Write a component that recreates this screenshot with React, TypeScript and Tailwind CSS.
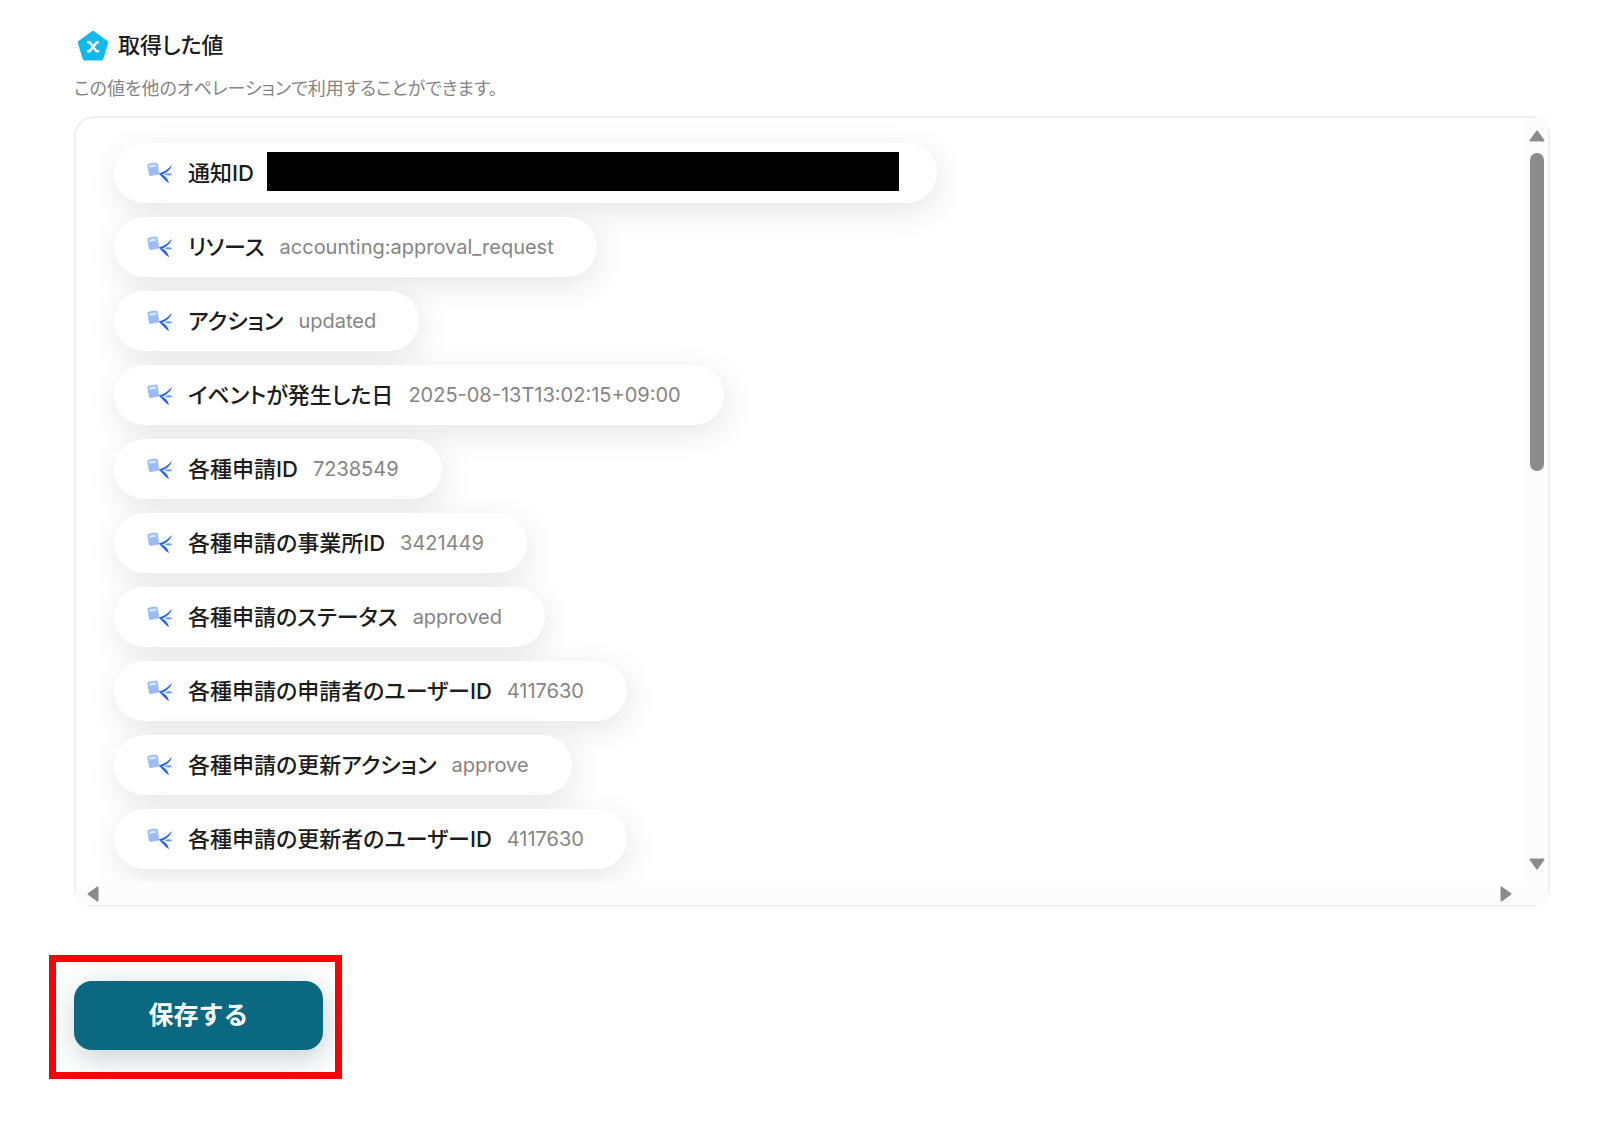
type Item = { label: string; value?: string };

const items: Item[] = [
  { label: '通知ID' },
  { label: 'リソース', value: 'accounting:approval_request' },
  { label: 'アクション', value: 'updated' },
  { label: 'イベントが発生した日', value: '2025-08-13T13:02:15+09:00' },
  { label: '各種申請ID', value: '7238549' },
  { label: '各種申請の事業所ID', value: '3421449' },
  { label: '各種申請のステータス', value: 'approved' },
  { label: '各種申請の申請者のユーザーID', value: '4117630' },
  { label: '各種申請の更新アクション', value: 'approve' },
  { label: '各種申請の更新者のユーザーID', value: '4117630' },
];

function PentagonIcon() {
  return (
    <svg viewBox="0 0 32 32" className="size-8" aria-hidden="true">
      <path
        d="M16 2.6 29.4 12.4 24.6 28.6H7.4L2.6 12.4Z"
        fill="#12b9ec"
        stroke="#12b9ec"
        strokeWidth="3.6"
        strokeLinejoin="round"
      />
      <path
        d="M11.2 12.2h1.6l6.6 9h1.8M20.8 12.2h-1L12.600 21.200h-1.600"
        fill="none"
        stroke="#fff"
        strokeWidth="2.4"
        strokeLinecap="round"
        strokeLinejoin="round"
      />
    </svg>
  );
}

function ServiceIcon() {
  return (
    <svg viewBox="0 0 26 22" className="h-[22px] w-[26px] shrink-0" aria-hidden="true">
      <g transform="rotate(-9 6 7)">
        <rect x="1" y="1" width="10.5" height="12.5" rx="2" fill="#9dbdfb" />
        <rect x="2.8" y="2.8" width="6.800" height="2.4" rx="0.8" fill="#dce8ff" />
        <path d="M3 7.8h6.500M3 10.800h6.500" stroke="#8fb2f9" strokeWidth="1" strokeDasharray="1.5 0.8" />
      </g>
      <path d="M11.5 11.5C17 10 21 7.500 24.800 3 24 7 20 10.800 15.500 12.400Z" fill="#2864f0" />
      <path d="M11.5 11.5C16.500 12 20.800 15.500 22 21.200 18 19 15.500 15 11.500 11.500Z" fill="#2864f0" />
      <path d="M17.5 12.400c2.500-1.500 5.500-1.500 8 0-2.500 1.500-5.500 1.500-8 0Z" fill="#6c99f7" />
    </svg>
  );
}

function Arrow({ turn, label }: { turn: string; label: string }) {
  return (
    <button type="button" aria-label={label} className="flex size-4 items-center justify-center">
      <svg viewBox="0 0 16 12" className={`h-3 w-4 shrink-0 ${turn}`} aria-hidden="true">
        <path d="M8 1.5 14.5 10.5H1.5Z" fill="#8b8b8b" stroke="#8b8b8b" strokeWidth="2" strokeLinejoin="round" />
      </svg>
    </button>
  );
}

function Pill({ label, value }: Item) {
  return (
    <li className="flex h-[60px] items-center rounded-full bg-white pr-[43px] pb-px pl-[33px] shadow-[2px_8px_32px_rgba(0,0,0,0.1)]">
      <ServiceIcon />
      <span className="ml-[15px] text-[22px] font-medium text-[#1c1c1c]">{label}</span>
      {value ? (
        <span className="ml-[15px] text-[20px] text-[#858585]">{value}</span>
      ) : (
        <span className="-mr-[5px] mb-0.5 ml-[13px] h-[39px] w-[632px] bg-black" />
      )}
    </li>
  );
}

export default function App() {
  return (
    <main className="bg-white pt-7 pr-[50px] pb-12 pl-[49px] font-[Inter,'Noto_Sans_CJK_JP',sans-serif] leading-8 [font-feature-settings:'palt']">
      <section className="pl-[25px]">
        <div className="flex items-center gap-[9px] pt-px pl-[3px]">
          <PentagonIcon />
          <h1 className="pb-0.5 text-[22px] font-medium text-[#1c1c1c]">取得した値</h1>
        </div>
        <p className="mt-2.5 text-[18px] text-[#858585]">この値を他のオペレーションで利用することができます。</p>

        <div className="mt-[11px] grid grid-cols-[1fr_22px] grid-rows-[1fr_23px] rounded-[20px] border-2 border-[#f0f0f0]">
          <ul className="flex h-[764px] flex-col items-start gap-3.5 overflow-hidden rounded-tl-[18px] pt-[25px] pl-[38px]">
            {items.map((item) => (
              <Pill key={item.label} {...item} />
            ))}
          </ul>
          <div className="flex flex-col items-center bg-[#fcfcfc] pt-2.5 pb-2.5">
            <Arrow turn="rotate-0" label="上へスクロール" />
            <div className="mt-[9px] h-[318px] w-3.5 rounded-full bg-[#8b8b8b]" />
            <div className="mt-auto flex">
              <Arrow turn="rotate-180" label="下へスクロール" />
            </div>
          </div>
          <div className="flex items-center justify-between bg-[#fcfcfc] pr-3 pl-[9px]">
            <Arrow turn="-rotate-90" label="左へスクロール" />
            <Arrow turn="rotate-90" label="右へスクロール" />
          </div>
          <div className="bg-[#fcfcfc]" />
        </div>
      </section>

      <div className="mt-12 w-fit border-7 border-[#ff0000] pt-[19px] pr-3 pb-[22px] pl-[18px]">
        <button
          type="button"
          className="flex h-[69px] w-[249px] items-center justify-center rounded-[18px] bg-[#0b6881] pb-px text-[25px] font-bold text-white shadow-[2px_8px_30px_rgba(30,60,70,0.25)] [font-feature-settings:normal]"
        >
          保存する
        </button>
      </div>
    </main>
  );
}
